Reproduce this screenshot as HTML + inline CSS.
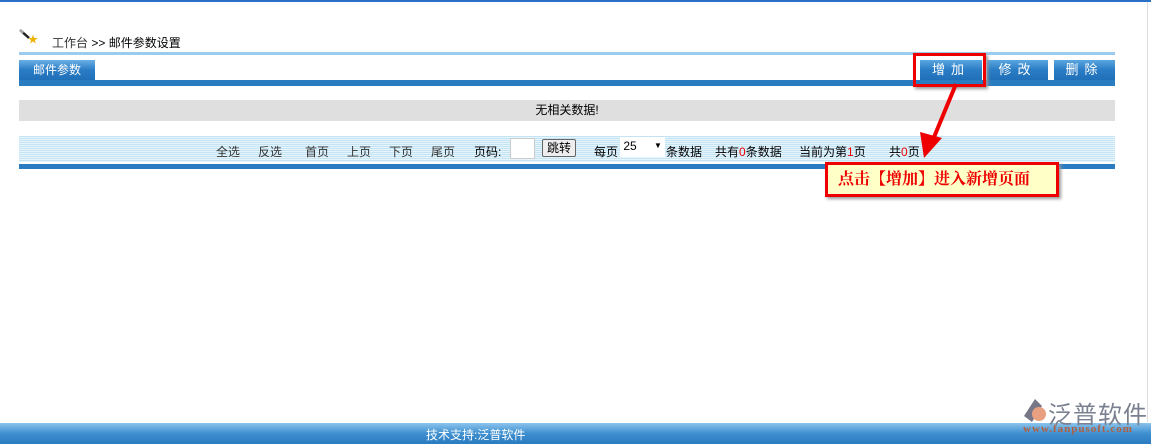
<!DOCTYPE html>
<html><head><meta charset="utf-8"><style>
body{margin:0;width:1151px;height:444px;position:relative;overflow:hidden;background:#fff;font-family:"Liberation Sans","Noto Sans CJK SC",sans-serif;font-size:12px;color:#000}
.a{position:absolute}
.p{position:absolute;top:143px;color:#333;white-space:nowrap}
.btn{position:absolute;top:60px;height:20px;background:linear-gradient(#5aa6e0,#2a7cc4 50%,#1f70b8);color:#fff;text-align:center;line-height:20px;font-size:13px;letter-spacing:6px}
</style></head><body>
<div class="a" style="left:0;top:0;width:1151px;height:2px;background:#2a6fc6"></div>
<div class="a" style="left:1147px;top:2px;width:1px;height:420px;background:#ddd"></div>
<svg class="a" style="left:18px;top:28px" width="20" height="16"><line x1="2" y1="2" x2="11" y2="10" stroke="#222" stroke-width="2.5"/><line x1="2" y1="2" x2="5" y2="5" stroke="#aaa" stroke-width="2.5"/><text x="10" y="15" font-size="10" fill="#f0b000">★</text></svg>
<div class="a" style="left:52px;top:34px;font-size:12px"><span style="color:#333">工作台</span> &gt;&gt; 邮件参数设置</div>
<div class="a" style="left:19px;top:52px;width:1096px;height:3px;background:#9ccbf0"></div>
<div class="a" style="left:19px;top:60px;width:76px;height:20px;background:linear-gradient(#6ab0e6,#2a7cc4 50%,#1f70b8);color:#fff;line-height:20px;text-align:center;font-size:12px">邮件参数</div>
<div class="btn" style="left:920px;width:62px">增加</div>
<div class="btn" style="left:987px;width:61px">修改</div>
<div class="btn" style="left:1054px;width:61px">删除</div>
<div class="a" style="left:19px;top:80px;width:1096px;height:6px;background:#2a7cc0"></div>
<div class="a" style="left:19px;top:100px;width:1096px;height:21px;background:#dfdfdf;text-align:center;line-height:21px">无相关数据!</div>
<div class="a" style="left:19px;top:136px;width:1096px;height:26px;background:repeating-linear-gradient(#c4e4f4 0 1px,#e6f4fb 1px 2px)"></div>
<div class="a" style="left:19px;top:164px;width:1096px;height:5px;background:#2a7cc0"></div>
<div class="p" style="left:216px">全选</div>
<div class="p" style="left:258px">反选</div>
<div class="p" style="left:305px">首页</div>
<div class="p" style="left:347px">上页</div>
<div class="p" style="left:389px">下页</div>
<div class="p" style="left:431px">尾页</div>
<div class="p" style="left:474px;color:#000">页码:</div>
<div class="a" style="left:510px;top:138px;width:23px;height:19px;background:#fff;border:1px solid #ccc"></div>
<div class="a" style="left:542px;top:139px;width:32px;height:16px;border:1px solid #666;border-radius:2px;background:#eee;text-align:center;line-height:16px;font-size:12px">跳转</div>
<div class="p" style="left:594px;color:#000">每页</div>
<div class="a" style="left:620px;top:137px;width:45px;height:20px;background:#fff;line-height:18px;font-size:12px">&nbsp;25<span style="position:absolute;left:34px;font-size:8px">▼</span></div>
<div class="p" style="left:666px;color:#000">条数据</div>
<div class="p" style="left:715px;color:#000">共有<span style="color:#e00">0</span>条数据</div>
<div class="p" style="left:799px;color:#000">当前为第<span style="color:#e00">1</span>页</div>
<div class="p" style="left:889px;color:#000">共<span style="color:#e00">0</span>页</div>
<div class="a" style="left:913px;top:53px;width:67px;height:28px;border:3px solid #e00;box-shadow:2px 2px 3px #999"></div>
<svg class="a" style="left:900px;top:80px" width="80" height="90"><line x1="56" y1="4" x2="32" y2="62" stroke="#e00" stroke-width="4"/><polygon points="24,78 20,52 42,58" fill="#e00"/></svg>
<div class="a" style="left:825px;top:162px;width:228px;height:29px;background:#ffffc8;border:3px solid #e00;box-shadow:2px 2px 3px #999;color:#e00;font-weight:bold;font-size:16px;line-height:29px;text-indent:10px;font-family:'Liberation Serif','Noto Serif CJK SC',serif">点击【增加】进入新增页面</div>
<div class="a" style="left:0;top:423px;width:1151px;height:21px;background:linear-gradient(#8cc4ec,#3d8fd0 50%,#2a7cc0)"></div>
<div class="a" style="left:426px;top:426px;color:#fff;font-size:12px">技术支持:泛普软件</div>
<svg class="a" style="left:1020px;top:396px" width="30" height="30"><path d="M15 3 L4 20 L12 26 L22 10Z" fill="#778"/><circle cx="19" cy="18" r="7" fill="#e8a080"/></svg>
<div class="a" style="left:1048px;top:395px;font-size:24px;color:#7a8090;letter-spacing:1px">泛普软件</div>
<div class="a" style="left:1023px;top:423px;font-size:11px;color:#b06040;font-family:'Liberation Serif',serif;font-weight:bold;letter-spacing:1px">www.fanpusoft.com</div>
</body></html>
